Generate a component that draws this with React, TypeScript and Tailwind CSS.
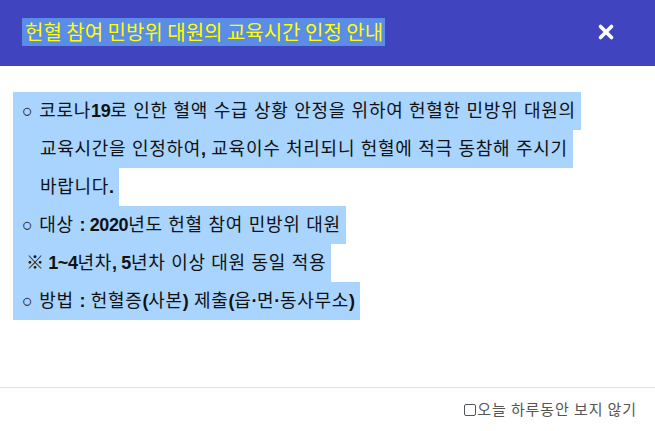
import { X } from "lucide-react";

const Line = ({ pad, children }: { pad: string; children: React.ReactNode }) => (
  <div className={`w-fit h-[38px] leading-[38px] bg-[#a8d4fe] pr-[5px] whitespace-nowrap ${pad}`}>{children}</div>
);

const B = ({ children }: { children: React.ReactNode }) => <b className="tracking-[-0.4px]">{children}</b>;

const App = () => {
  return (
    <div className="w-[655px] h-[431px] flex flex-col bg-white overflow-hidden">
      {/* header */}
      <div className="h-[66px] shrink-0 bg-[#4144bf] flex items-center justify-between pl-[22px] pr-[38px]">
        <h1
          className="bg-[#5b8ce6] text-[#ffff00] text-[20px] leading-[28px] h-[28px] pl-[3px] pr-[2px] -mt-[3px] whitespace-nowrap"
          style={{ fontFamily: '"Noto Sans CJK KR", sans-serif' }}
        >
          헌혈 참여 민방위 대원의 교육시간 인정 안내
        </h1>
        <X className="w-[22px] h-[22px] text-white -mt-[3px]" strokeWidth={4} />
      </div>

      {/* body */}
      <div
        className="flex-1 pt-[26px] px-[13px] text-[#111] text-[18px] tracking-[0.7px]"
        style={{ fontFamily: '"Liberation Sans", "Noto Sans CJK KR", sans-serif' }}
      >
        <Line pad="pl-[9px]">
          ○ 코로나<B>19</B>로 인한 혈액 수급 상황 안정을 위하여 헌혈한 민방위 대원의
        </Line>
        <Line pad="pl-[27px]">
          교육시간을 인정하여<B>,</B> 교육이수 처리되니 헌혈에 적극 동참해 주시기
        </Line>
        <Line pad="pl-[27px]">
          바랍니다<B>.</B>
        </Line>
        <Line pad="pl-[9px]">
          ○ 대상 <B>: 2020</B>년도 헌혈 참여 민방위 대원
        </Line>
        <Line pad="pl-[13px]">
          <B>※ 1~4</B>년차<B>, 5</B>년차 이상 대원 동일 적용
        </Line>
        <Line pad="pl-[9px]">
          ○ 방법 <B>:</B> 헌혈증<B>(</B>사본<B>)</B> 제출<B>(</B>읍<B>·</B>면<B>·</B>동사무소<B>)</B>
        </Line>
      </div>

      {/* footer */}
      <div className="h-[44px] shrink-0 border-t border-[#e3e3e3] flex items-center justify-end pr-[18px]">
        <label
          className="flex items-center text-[15px] tracking-[0.9px] text-[#555]"
          style={{ fontFamily: '"Noto Sans CJK KR", sans-serif' }}
        >
          <span className="w-[12px] h-[12px] border border-[#555] rounded-[2px] mr-[1px]" />
          오늘 하루동안 보지 않기
        </label>
      </div>
    </div>
  );
};

export default App;
